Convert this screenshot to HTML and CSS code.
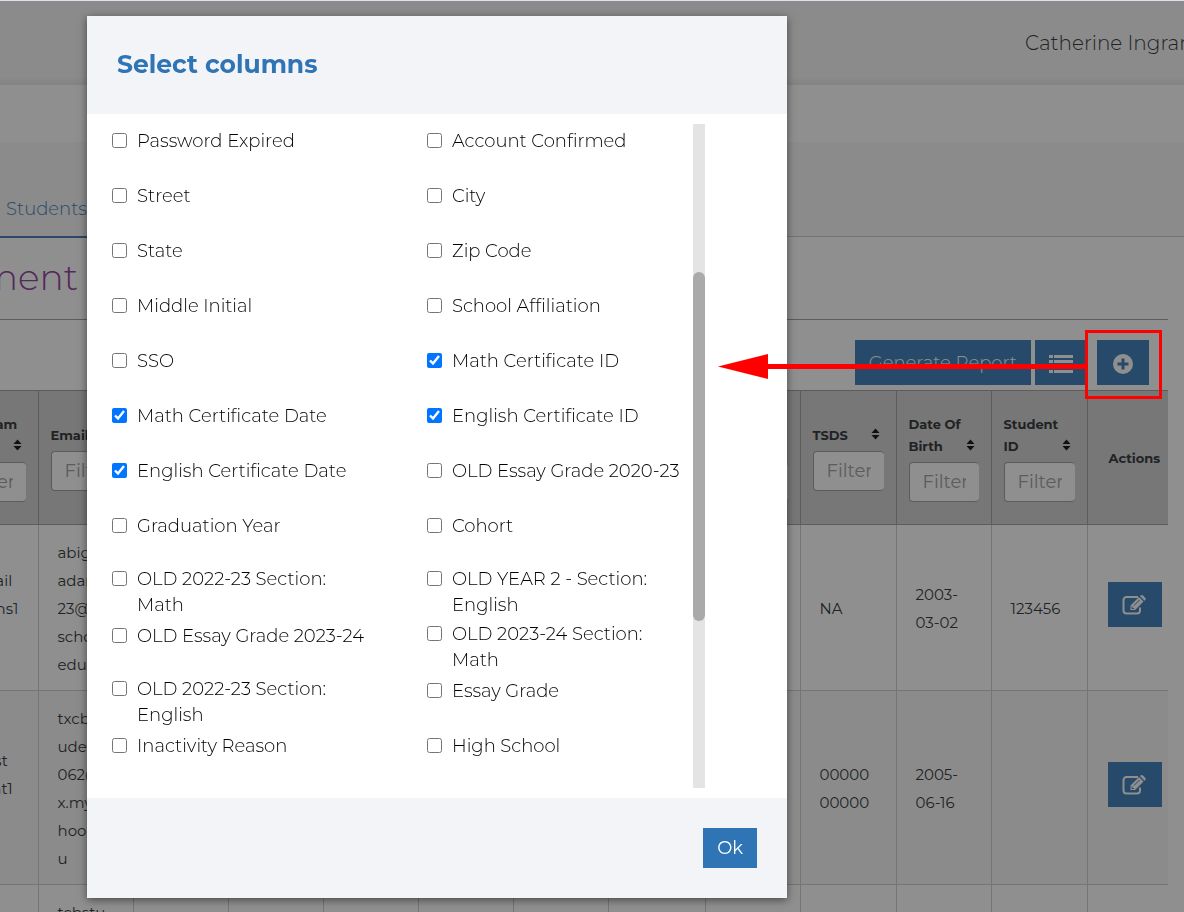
FILE: index.html
```html
<!DOCTYPE html>
<html lang="en">
<head>
    <meta charset="UTF-8">
    <meta name="viewport" content="width=device-width, initial-scale=1.0">
    <title>Students</title>
    <link rel="stylesheet" href="styles.css">
</head>
<body>
    <!-- shared icons -->
    <svg class="sprite" aria-hidden="true">
        <symbol id="sort" viewBox="0 0 9 12">
            <path d="M4.5 0.500L8.500 5H.5zM4.500 11.500L.5 7h8z"/>
        </symbol>
        <symbol id="edit" viewBox="0 0 24 20">
            <path d="M16 2H4.500A3 3 0 0 0 1.500 5v10.500a3 3 0 0 0 3 3H15a3 3 0 0 0 3-3v-3" fill="none" stroke="currentColor" stroke-width="2"/>
            <path d="M8.500 10.500L17 2l4.500 4.500-8.500 8.500H8.500zM18 1l1-.7q1-.6 2 .3l2.300 2.300q.9 1 0 2L22.500 5.700z"/>
            <path d="M10 11.500v2h2M12 10.500l5.500-5.500" fill="none" stroke="#2f74b5"/>
        </symbol>
    </svg>

    <div class="page">
        <header class="topbar">
            <span class="user-name">Catherine Ingram</span>
        </header>
        <nav class="tabs">
            <a href="#students" class="tab">Students</a>
        </nav>
        <main class="content">
            <h1 class="page-title"><span>ment</span></h1>
            <div class="toolbar">
                <button type="button" class="btn">Generate Report</button>
                <button type="button" class="btn btn-icon" aria-label="List">
                    <svg width="24" height="20" viewBox="0 0 24 20" fill="currentColor"><path d="M0 1h4v3H0zM5 1h19v3H5zM0 6h4v3H0zM5 6h19v3H5zM0 11h4v3H0zM5 11h19v3H5zM0 16h4v3H0zM5 16h19v3H5z"/></svg>
                </button>
                <button type="button" class="btn btn-icon btn-add" aria-label="Select columns">
                    <svg width="20" height="20" viewBox="0 0 20 20" fill="currentColor"><path fill-rule="evenodd" d="M10 0a10 10 0 1 0 0 20a10 10 0 1 0 0-20zM8.500 4.500h3v4h4v3h-4v4h-3v-4h-4v-3h4z"/></svg>
                </button>
            </div>
            <div class="table-wrap">
                <table class="students">
                    <thead>
                        <tr>
                            <th><div class="th-title">TSI Exam<svg class="sort"><use href="#sort"/></svg></div><input type="text" placeholder="Filter" aria-label="Filter exam"></th>
                            <th><div class="th-title">Email<svg class="sort"><use href="#sort"/></svg></div><input type="text" placeholder="Filter" aria-label="Filter email"></th>
                            <th></th>
                            <th></th>
                            <th></th>
                            <th></th>
                            <th></th>
                            <th class="col-phone"></th>
                            <th><div class="th-title">Grade Level<svg class="sort"><use href="#sort"/></svg></div><input type="text" placeholder="Filter" aria-label="Filter grade level"></th>
                            <th class="col-wide"><div class="th-title">TSDS<svg class="sort"><use href="#sort"/></svg></div><input type="text" placeholder="Filter" aria-label="Filter TSDS"></th>
                            <th><div class="th-title">Date Of Birth<svg class="sort"><use href="#sort"/></svg></div><input type="text" placeholder="Filter" aria-label="Filter date of birth"></th>
                            <th class="col-wide"><div class="th-title">Student ID<svg class="sort"><use href="#sort"/></svg></div><input type="text" placeholder="Filter" aria-label="Filter student ID"></th>
                            <th class="col-actions">Actions</th>
                        </tr>
                    </thead>
                    <tbody>
                        <tr>
                            <td>abigail<br>adams1<br>23</td>
                            <td>abigail<br>adams1<br>23@tx.<br>school.<br>edu</td>
                            <td></td><td></td><td></td><td></td><td></td><td></td><td></td>
                            <td>NA</td>
                            <td>2003-<br>03-02</td>
                            <td>123456</td>
                            <td class="actions"><button type="button" class="btn btn-edit" aria-label="Edit"><svg width="24" height="20" fill="currentColor"><use href="#edit"/></svg></button></td>
                        </tr>
                        <tr>
                            <td>txcbst<br>udent1<br>062</td>
                            <td>txcbst<br>udent1<br>062@t<br>x.mysc<br>hool.ed<br>u</td>
                            <td></td><td></td><td></td><td></td><td></td><td></td><td></td>
                            <td>00000<br>00000</td>
                            <td>2005-<br>06-16</td>
                            <td></td>
                            <td class="actions"><button type="button" class="btn btn-edit" aria-label="Edit"><svg width="24" height="20" fill="currentColor"><use href="#edit"/></svg></button></td>
                        </tr>
                        <tr>
                            <td></td>
                            <td>tcbstu<br>dent</td>
                            <td></td><td></td><td></td><td></td><td></td><td></td><td></td><td></td><td></td><td></td><td></td>
                        </tr>
                    </tbody>
                </table>
            </div>
        </main>
    </div>

    <div class="overlay">
        <div class="modal" role="dialog" aria-modal="true" aria-labelledby="modalTitle">
            <div class="modal-header">
                <h2 id="modalTitle">Select columns</h2>
            </div>
            <div class="modal-body">
                <ul class="column-list">
                    <li><label><input type="checkbox"><span>Password Expired</span></label></li>
                    <li><label><input type="checkbox"><span>Account Confirmed</span></label></li>
                    <li><label><input type="checkbox"><span>Street</span></label></li>
                    <li><label><input type="checkbox"><span>City</span></label></li>
                    <li><label><input type="checkbox"><span>State</span></label></li>
                    <li><label><input type="checkbox"><span>Zip Code</span></label></li>
                    <li><label><input type="checkbox"><span>Middle Initial</span></label></li>
                    <li><label><input type="checkbox"><span>School Affiliation</span></label></li>
                    <li><label><input type="checkbox"><span>SSO</span></label></li>
                    <li><label><input type="checkbox" checked><span>Math Certificate ID</span></label></li>
                    <li><label><input type="checkbox" checked><span>Math Certificate Date</span></label></li>
                    <li><label><input type="checkbox" checked><span>English Certificate ID</span></label></li>
                    <li><label><input type="checkbox" checked><span>English Certificate Date</span></label></li>
                    <li><label><input type="checkbox"><span>OLD Essay Grade 2020-23</span></label></li>
                    <li><label><input type="checkbox"><span>Graduation Year</span></label></li>
                    <li><label><input type="checkbox"><span>Cohort</span></label></li>
                    <li><label><input type="checkbox"><span>OLD 2022-23 Section: Math</span></label></li>
                    <li><label><input type="checkbox"><span>OLD YEAR 2 - Section: English</span></label></li>
                    <li><label><input type="checkbox"><span>OLD Essay Grade 2023-24</span></label></li>
                    <li><label><input type="checkbox"><span>OLD 2023-24 Section: Math</span></label></li>
                    <li><label><input type="checkbox"><span>OLD 2022-23 Section: English</span></label></li>
                    <li><label><input type="checkbox"><span>Essay Grade</span></label></li>
                    <li><label><input type="checkbox"><span>Inactivity Reason</span></label></li>
                    <li><label><input type="checkbox"><span>High School</span></label></li>
                </ul>
                <div class="scrollbar"><div class="scrollbar-thumb"></div></div>
            </div>
            <div class="modal-footer">
                <button type="button" class="btn btn-ok">Ok</button>
            </div>
        </div>
    </div>

    <!-- arrow from the add button to the dialog -->
    <svg class="pointer" width="444" height="69" viewBox="0 0 444 69" aria-hidden="true">
        <path d="M0 36.500L50 24v25z" fill="#f00"/>
        <path d="M49 36.500H368" stroke="#f00" stroke-width="5"/>
        <rect x="368.500" y="1.500" width="74" height="66" fill="none" stroke="#f00" stroke-width="3"/>
    </svg>
</body>
</html>
```
FILE: styles.css
```css
* {
    box-sizing: border-box;
}
body {
    margin: 0;
    font-family: 'Montserrat', 'Inter', sans-serif;
    font-size: 18px;
    font-weight: 300;
    color: #212529;
    background-color: #fff;
    overflow: hidden;
}
.sprite {
    display: none;
}
.page {
    height: 100vh;
    overflow: hidden;
    border-top: 1px solid #e4deee;
}
.topbar {
    display: flex;
    justify-content: flex-end;
    align-items: center;
    height: 84px;
    background: linear-gradient(#f7f7f7 90%, #e6e6e6);
}
.user-name {
    width: 159px;
    font-size: 20px;
    white-space: nowrap;
}
.tabs {
    display: flex;
    align-items: flex-end;
    height: 95px;
    margin-top: 57px;
    background-color: #f7f7f7;
    border-bottom: 1px solid #cacaca;
}
.tab {
    width: 96px;
    margin-bottom: -2px;
    padding: 0 6px 14px;
    line-height: 26px;
    color: #2f74b5;
    text-decoration: none;
    border-bottom: 2px solid #3a6db5;
}
.content {
    padding-right: 16px;
}
.page-title {
    display: flex;
    margin: 0;
    height: 83px;
    border-bottom: 1px solid #989898;
    color: #8b2f97;
    font-size: 36px;
    font-weight: 300;
    line-height: 80px;
}
.page-title span {
    display: flex;
    justify-content: flex-end;
    width: 78px;
}
.toolbar {
    display: flex;
    justify-content: flex-end;
    gap: 4px;
    padding: 20px 19px 5px 0;
}
.btn {
    height: 45px;
    padding: 0 14px;
    border: none;
    background-color: #2f74b5;
    color: #fff;
    font-family: inherit;
    font-size: 18px;
    font-weight: 300;
    cursor: pointer;
}
.btn svg {
    display: block;
}
.btn-icon {
    display: flex;
    align-items: center;
    justify-content: center;
    width: 52px;
    padding: 2px 0 0;
}
.btn-add {
    margin-left: 6px;
}
.table-wrap {
    display: flex;
    justify-content: flex-end;
}
.students {
    flex: none;
    width: 1225px;
    table-layout: fixed;
    border-collapse: collapse;
    border-top: 1px solid #989898;
}
.students th {
    height: 134px;
    padding: 0 12px;
    background-color: #cecece;
    border-right: 1px solid #989898;
    border-bottom: 1px solid #989898;
    font-size: 13px;
    font-weight: 700;
    line-height: 22px;
    text-align: left;
    vertical-align: middle;
}
.students .col-wide {
    width: 96px;
}
.students .col-phone {
    width: 97px;
}
.students .col-actions {
    width: 81px;
    padding: 0 0 0 21px;
}
.students td {
    padding: 14px 0 11px 19px;
    border-right: 1px solid #cacaca;
    border-bottom: 1px solid #cacaca;
    font-size: 15px;
    font-weight: 400;
    line-height: 28px;
}
.students tr :last-child {
    border-right: none;
}
.students tbody tr:nth-child(even) {
    background-color: #f7f7f7;
}
.students td.actions {
    padding: 0 0 6px 20px;
}
.btn-edit {
    display: block;
    width: 54px;
}
.th-title {
    display: flow-root;
    margin-bottom: 5px;
}
.sort {
    float: right;
    width: 9px;
    height: 12px;
    margin: 4px 4px 6px 6px;
}
.students input {
    display: block;
    width: 100%;
    height: 40px;
    padding: 0 13px;
    border: 1px solid #989898;
    border-radius: 4px;
    background-color: #fff;
    font-family: inherit;
    font-size: 18px;
}
.students input::placeholder {
    color: #999;
}
.overlay {
    position: fixed;
    top: 1px;
    right: 0;
    bottom: 0;
    left: 0;
    padding: 15px 87px;
    background-color: rgba(32, 32, 32, 0.5);
}
.modal {
    width: 100%;
    max-width: 700px;
    background-color: #fff;
    box-shadow: 0 2px 8px rgba(0, 0, 0, 0.5);
}
.modal-header {
    padding: 30px 30px 32px;
    background-color: #f3f4f8;
}
.modal-header h2 {
    margin: 0;
    color: #2f74b5;
    font-size: 25px;
    font-weight: 700;
    line-height: 36px;
}
.modal-body {
    display: flex;
    padding: 10px 82px 10px 25px;
    color: #000;
}
.column-list {
    flex: 1;
    display: grid;
    grid-template-columns: 315px 1fr;
    grid-auto-rows: 55px;
    margin: 0;
    padding: 2px 0;
    list-style: none;
}
.column-list label {
    display: grid;
    grid-template-columns: 15px 1fr;
    align-content: center;
    column-gap: 10px;
    max-width: 255px;
    min-height: 30px;
    line-height: 26px;
}
.column-list input {
    width: 15px;
    height: 15px;
    margin: 5px 0 0;
}
.scrollbar {
    width: 12px;
    background-color: #e4e4e4;
}
.scrollbar-thumb {
    height: 349px;
    margin-top: 148px;
    border-radius: 6px;
    background-color: #aaa;
}
.modal-footer {
    display: flex;
    justify-content: flex-end;
    padding: 30px;
    background-color: #f3f4f8;
}
.btn-ok {
    height: 40px;
    font-weight: 400;
}
.pointer {
    position: absolute;
    top: 330px;
    left: 718px;
}
```
